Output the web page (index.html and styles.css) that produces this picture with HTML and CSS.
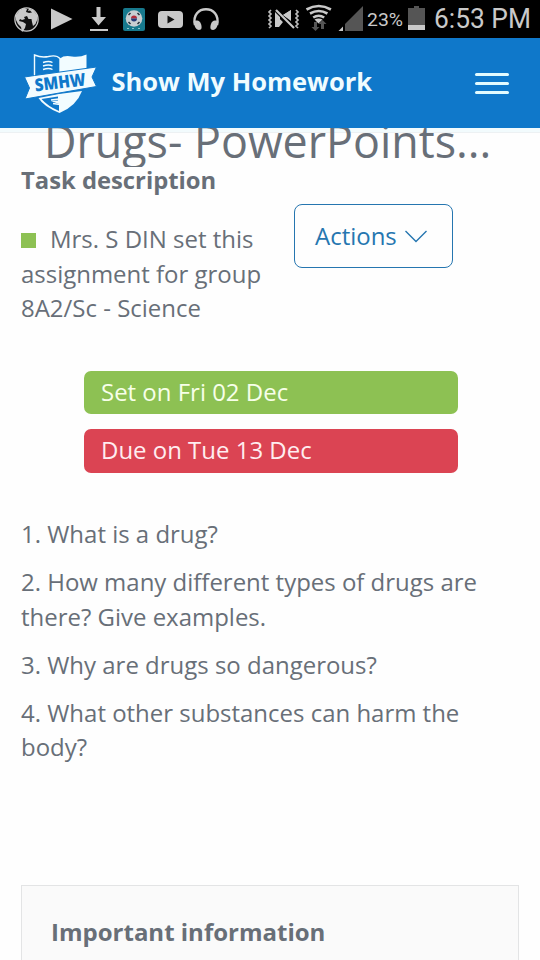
FILE: index.html
```html
<!DOCTYPE html>
<html lang="en">
<head>
<meta charset="utf-8">
<title>Show My Homework</title>
<link rel="stylesheet" href="styles.css">
</head>
<body>
<div class="status">
  <svg class="status-left" width="230" height="38" viewBox="0 0 230 38" fill="#c9c9c9">
    <circle cx="26.500" cy="19.500" r="11.600" fill="#111" stroke="#c9c9c9" stroke-width="1.300"/>
    <path d="M16 15l4-5 4-2 3 1-1 3 3 1-2 3-3 1 1 2-3 1-2-1-1 2 4 1 3 2-1 4-2 3-1 1-1-5-3-3-2-4zM29 8.500l4 1.500 4 5 .5 4-2 5-2.500 2-1-4-.5-3-3 0-1.500-3 2-3 3-.5-2-2-2 .5z"/>
    <path d="M51 8.500l21.500 10.500L51 29.500z"/>
    <path d="M96.500 7h4v10h5.500L98.500 25.500 91.500 17h5zM90 29h18v2H90z"/>
    <rect x="123" y="8" width="22" height="23" rx="2" fill="#17798d"/>
    <circle cx="134" cy="18.500" r="8.300" fill="#c9cfd2"/>
    <path d="M131 18.500a3 3 0 0 1 6 0z" fill="#b42b3a"/><path d="M131 18.500a3 3 0 0 0 6 0z" fill="#263b78"/>
    <path d="M128.500 15l2-2M137.500 13l2 2M128.500 22l2 2M137.500 24l2-2" stroke="#263039" stroke-width="1.500"/>
    <path d="M127 28.500h2M132 28.500h2M138 28.500h2" stroke="#8fc7cb"/>
    <rect x="158" y="11" width="25" height="17" rx="4"/>
    <path d="M167.500 15.500l7 4-7 4z" fill="#111"/>
    <path d="M195 25c-5-21 27-21 22 0" fill="none" stroke="#c9c9c9" stroke-width="2.500"/>
    <path d="M194 22c3-3 6-1 7 2s1 6-2 6-5-4-5-8zM218 22c-3-3-6-1-7 2s-1 6 2 6 5-4 5-8z"/>
  </svg>
  <svg class="status-right" width="280" height="38" viewBox="260 0 280 38" fill="#c9c9c9">
    <path d="M275 12v15h4l4-5zM291 10v10l-8-5z"/>
    <path d="M274 10.500l20 17.500" stroke="#000" stroke-width="5"/><path d="M275 12v15l5-5v-5zM291 10v11l-8-6z"/><path d="M276 10l18 18" stroke="#c9c9c9" stroke-width="2.200"/>
    <path d="M271 10l-2 2 2 2-2 2 2 2-2 2 2 2-2 2 2 2-2 2M296 10l2 2-2 2 2 2-2 2 2 2-2 2 2 2-2 2 2 2" fill="none" stroke="#bbb" stroke-width="1.700"/>
    <g fill="none" stroke="#c9c9c9" stroke-width="2.600"><path d="M306.500 9.500q12.200-7 24.400 0M310 13.500q8.700-5 17.400 0M313.200 17.500q5.500-3.500 11 0"/></g>
    <path d="M314 22h3v5h2.500l-4 4-4-4h2.500zM321 29v-5h-2.500l4-4 4 4H324v5z" fill="#555"/>
    <path d="M314.500 19.500q4-2 8 0l-4 4z"/>
    <path d="M345 24l18-18v25h-18z" fill="#555"/><path d="M338.500 31l4.500-4.500V31z"/>
    <text x="367" y="26" class="percent" textLength="36" lengthAdjust="spacingAndGlyphs">23%</text>
    <path d="M408 8h6V6h5v2h6v22h-17z" fill="#555"/><path d="M408 25h17v5h-17z"/>
    <text x="434" y="28" class="clock" textLength="97" lengthAdjust="spacingAndGlyphs">6:53 PM</text>
  </svg>
</div>
<header class="topbar">
  <svg class="logo" width="76" height="64" viewBox="24 51 76 64">
    <path d="M35.500 76V55q7 3 14 1.500 8-2 11.500 2V78" fill="none" stroke="#f2fcff" stroke-width="1.400"/>
    <path d="M61 58.500q4-3.500 12-2 8 1 14.500-2V70L61 76z" fill="#f2fcff"/>
    <path d="M44 62.500q6-2 9.500 0M44 66q6-2 9.500 0M44 69.500q6-2 9.500 0" fill="none" stroke="#f2fcff" stroke-width="1.400"/>
    <path d="M39.500 98q5 8.500 21 15 17-7 22.500-22L60 94z" fill="#f2fcff"/>
    <path d="M42.500 99q6 7 17.500 12v-7l-8-3 7-.500v-4z" fill="#0f78ca"/>
    <path d="M52 100l8-1M54 103.500l7 1" stroke="#f2fcff" stroke-width="1.400"/>
    <path d="M25.500 77l10-1.500L97.500 67 93 77l4.500 9.500L26 99l4.500-11z" fill="#f2fcff" stroke="#0f78ca" stroke-width="1"/>
    <text class="logo-text" x="36.500" y="91.500" transform="rotate(-7 36 91)" textLength="51" lengthAdjust="spacingAndGlyphs">SMHW</text>
  </svg>
  <span class="brand">Show My Homework</span>
  <span class="menu"><i></i><i></i><i></i></span>
</header>
<main>
  <h1>Drugs- PowerPoints...</h1>
  <h2>Task description</h2>
  <section class="intro">
    <p class="setter"><i class="marker"></i>Mrs. S DIN set this<br>assignment for group<br>8A2/Sc - Science</p>
    <div class="actions"><span>Actions</span><svg width="22" height="14" viewBox="0 0 22 14"><path d="M.5 2l10.500 10.500L21.500 2" fill="none" stroke="#2676b0" stroke-width="1.400"/></svg></div>
  </section>
  <div class="dates">
    <div class="date set">Set on Fri 02 Dec</div>
    <div class="date due">Due on Tue 13 Dec</div>
  </div>
  <div class="questions">
    <p>1. What is a drug?</p>
    <p>2. How many different types of drugs are<br>there? Give examples.</p>
    <p>3. Why are drugs so dangerous?</p>
    <p>4. What other substances can harm the<br>body?</p>
  </div>
  <section class="info"><h2>Important information</h2></section>
</main>
</body>
</html>
```
FILE: styles.css
```css
* { box-sizing: border-box; margin: 0; padding: 0; }
body { width: 540px; height: 960px; overflow: hidden; background: #fefefe; color: #686f78; font: 23.980px/34.500px "Open Sans", sans-serif; white-space: nowrap; }
svg { display: block; }
.status { display: flex; justify-content: space-between; height: 38px; background: #000; }
.percent { font: 18.500px Roboto, sans-serif; }
.clock { font: 27.500px Roboto, sans-serif; }
.topbar { display: flex; align-items: center; height: 90px; padding: 0 31px 0 23px; background: #0f78ca; }
.logo-text { font: 800 17.500px "Open Sans", sans-serif; fill: #0f78ca; }
.brand { margin: -4px auto 0 12.500px; color: #f0fcff; font-size: 25.500px; font-weight: 700; }
.menu { display: grid; gap: 6px; width: 34px; }
.menu i { height: 3px; border-radius: 2px; background: #e2fbff; }
main { height: 832px; border-top: 4px solid #f2fbfd; box-shadow: inset 0 1px #edf1f3; }
h1 { height: 39px; margin-top: -4px; padding-left: 44px; overflow: hidden; font-size: 44.800px; font-weight: 400; line-height: 26px; }
h2 { font-size: 24px; font-weight: 700; line-height: 34px; }
main > h2 { margin: -4px 0 0 21px; font-size: 23.800px; }
.intro { display: flex; height: 173.500px; padding: 7px 21px 0; }
.setter { width: 273px; padding-top: 18px; }
.marker { display: inline-block; width: 15px; height: 15px; margin-right: 14px; background: #8dc153; }
.actions { display: flex; align-items: center; gap: 8px; width: 159px; height: 64px; padding-left: 20px; border: 1.500px solid #2676b0; border-radius: 8px; color: #2676b0; }
.dates { display: grid; gap: 15px; width: 373.500px; margin-left: 84px; }
.date { height: 43.500px; padding-left: 17px; border-radius: 7px; line-height: 42px; }
.set { background: #8dc153; color: #f7ffe9; }
.due { background: #db4453; color: #ffedf0; }
.questions { display: grid; gap: 13.500px; padding: 44.500px 21px 0; }
.info { width: 498px; height: 90px; margin: 120px 0 0 21px; padding: 29px; border: 1.500px solid #e3e4e5; background: #fafafa; }
```
